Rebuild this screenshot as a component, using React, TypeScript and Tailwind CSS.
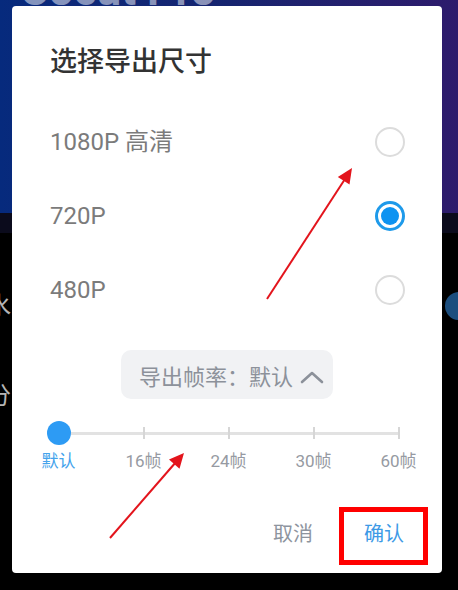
import React from "react";

const FONT = { fontFamily: "Roboto, 'Noto Sans CJK SC', 'Noto Sans', sans-serif" };

function Radio({ checked }: { checked: boolean }) {
  return checked ? (
    <div className="flex h-[30px] w-[30px] items-center justify-center rounded-full border-[3px] border-[#1e9aea]">
      <div className="h-[18px] w-[18px] rounded-full bg-[#0d93f1]" />
    </div>
  ) : (
    <div className="h-[30px] w-[30px] rounded-full border-2 border-[#dcdcdc]" />
  );
}

const options = [
  { label: "1080P 高清", checked: false },
  { label: "720P", checked: true },
  { label: "480P", checked: false },
];

const rates = ["默认", "16帧", "24帧", "30帧", "60帧"];

export default function App() {
  return (
    <div className="relative h-[590px] w-[458px] overflow-hidden bg-black" style={FONT}>
      {/* background app */}
      <div className="relative h-[213px] overflow-hidden bg-gradient-to-r from-[#062a7d] via-[#16246f] to-[#2d1b6c]">
        <div className="mt-[-34px] ml-[20px] text-[44px] font-bold leading-[48px] text-white/50">Cocut Pro</div>
      </div>
      <div className="h-[20px] bg-[#0b0b1c]" />
      <div className="flex flex-col">
        <div className="flex h-[30px] items-center justify-between mt-[58px]">
          <span className="ml-[-13px] text-[24px] text-[#b5b5b5]">水</span>
          <div className="mr-[-15px] h-[28px] w-[28px] rounded-full bg-[#1c4e7e]" />
        </div>
        <div className="flex h-[30px] items-center mt-[60px]">
          <span className="ml-[-13px] text-[24px] text-[#b5b5b5]">分</span>
        </div>
      </div>

      {/* dialog */}
      <div className="absolute left-[12px] top-[6px] flex h-[567px] w-[430px] flex-col rounded-[4px] bg-white">
        <div className="pl-[38px] pt-[38px] text-[27px] font-medium leading-[36px] text-[#333333]">
          选择导出尺寸
        </div>
        <div className="mt-[25px] flex flex-col">
          {options.map((o) => (
            <div key={o.label} className="flex h-[74px] items-center justify-between pl-[38px] pr-[37px]">
              <span className="text-[24px] leading-[30px] text-[#7b7b7b]">{o.label}</span>
              <Radio checked={o.checked} />
            </div>
          ))}
        </div>
        <div className="mt-[23px] flex justify-center">
          <div className="flex h-[49px] w-[212px] items-center rounded-[10px] bg-[#f1f2f4] pl-[18px] pt-[6px]">
            <span className="text-[22px] leading-[28px] text-[#8c919a]">导出帧率：默认</span>
            <svg width="24" height="14" viewBox="0 0 24 14" className="ml-[7px] mb-[2px]">
              <path d="M2 12 L12 3 L22 12" fill="none" stroke="#8c919a" strokeWidth="2.6" strokeLinecap="round" strokeLinejoin="round" />
            </svg>
          </div>
        </div>
        <div className="ml-[4px] mt-[22px] grid w-[425px] grid-cols-5">
          {rates.map((r, i) => (
            <div key={r} className="flex flex-col items-center">
              <div className="flex h-[24px] w-full items-center">
                <div className={`h-[3px] flex-1 ${i === 0 ? "bg-transparent" : "bg-[#e2e2e2]"}`} />
                {i === 0 ? (
                  <div className="h-[24px] w-[24px] rounded-full bg-[#2d9bf4]" />
                ) : (
                  <div className="h-[12px] w-[2px] bg-[#d6d6d6]" />
                )}
                <div className={`h-[3px] flex-1 ${i === 4 ? "bg-transparent" : "bg-[#e2e2e2]"}`} />
              </div>
              <span className={`mt-[4px] text-[17px] leading-[24px] ${i === 0 ? "text-[#44a3ec]" : "text-[#969aa2]"}`}>
                {r}
              </span>
            </div>
          ))}
        </div>
        <div className="mt-[41px] flex h-[40px] items-center justify-end gap-[51px] pr-[38px]">
          <span className="text-[20px] leading-[28px] text-[#8d949e]">取消</span>
          <span className="text-[20px] leading-[28px] text-[#3d9ae6]">确认</span>
        </div>
      </div>

      {/* annotations */}
      <div className="absolute left-[339px] top-[507px] h-[58px] w-[89px] border-[5px] border-[#ff0000]" />
      <svg className="absolute left-0 top-0" width="458" height="590" viewBox="0 0 458 590">
        <line x1="267" y1="299" x2="345" y2="179" stroke="#e3141c" strokeWidth="2" />
        <polygon points="352,168 349.5,184.5 337.8,176.9" fill="#e3141c" />
        <line x1="110" y1="538" x2="176" y2="462" stroke="#e3141c" strokeWidth="2" />
        <polygon points="184,453 179.5,468.8 169,459.6" fill="#e3141c" />
      </svg>
    </div>
  );
}
